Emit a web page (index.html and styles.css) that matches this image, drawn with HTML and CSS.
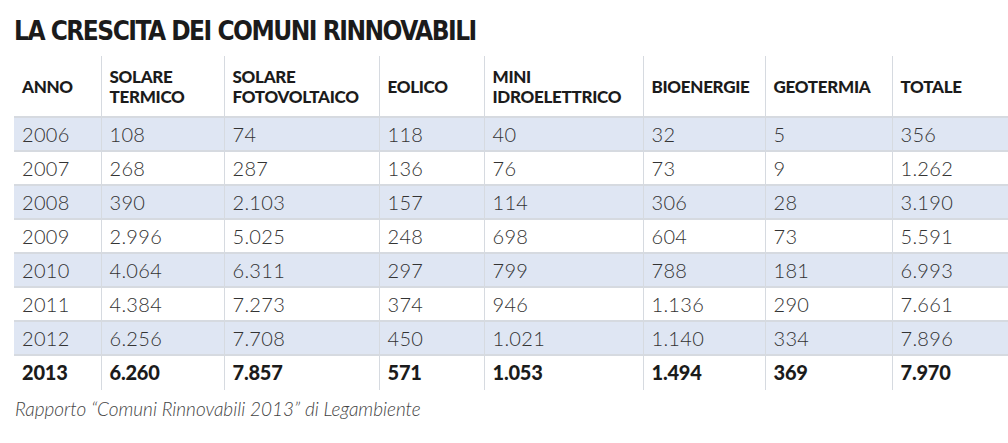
FILE: index.html
```html
<!DOCTYPE html>
<html lang="it">
<head>
<meta charset="utf-8">
<link rel="stylesheet" href="styles.css">
</head>
<body>
<h1 class="title">LA CRESCITA DEI COMUNI RINNOVABILI</h1>
<table class="data">
<colgroup>
<col class="c1"><col class="c2"><col class="c3"><col class="c4"><col class="c5"><col class="c6"><col class="c7"><col class="c8">
</colgroup>
<thead>
<tr><th>ANNO</th><th>SOLARE<br>TERMICO</th><th>SOLARE<br>FOTOVOLTAICO</th><th>EOLICO</th><th>MINI<br>IDROELETTRICO</th><th>BIOENERGIE</th><th>GEOTERMIA</th><th>TOTALE</th></tr>
</thead>
<tbody>
<tr class="alt"><td>2006</td><td>108</td><td>74</td><td>118</td><td>40</td><td>32</td><td>5</td><td>356</td></tr>
<tr><td>2007</td><td>268</td><td>287</td><td>136</td><td>76</td><td>73</td><td>9</td><td>1.262</td></tr>
<tr class="alt"><td>2008</td><td>390</td><td>2.103</td><td>157</td><td>114</td><td>306</td><td>28</td><td>3.190</td></tr>
<tr><td>2009</td><td>2.996</td><td>5.025</td><td>248</td><td>698</td><td>604</td><td>73</td><td>5.591</td></tr>
<tr class="alt"><td>2010</td><td>4.064</td><td>6.311</td><td>297</td><td>799</td><td>788</td><td>181</td><td>6.993</td></tr>
<tr><td>2011</td><td>4.384</td><td>7.273</td><td>374</td><td>946</td><td>1.136</td><td>290</td><td>7.661</td></tr>
<tr class="alt"><td>2012</td><td>6.256</td><td>7.708</td><td>450</td><td>1.021</td><td>1.140</td><td>334</td><td>7.896</td></tr>
<tr class="total"><td>2013</td><td>6.260</td><td>7.857</td><td>571</td><td>1.053</td><td>1.494</td><td>369</td><td>7.970</td></tr>
</tbody>
</table>
<p class="source">Rapporto “Comuni Rinnovabili 2013” di Legambiente</p>
</body>
</html>
```
FILE: styles.css
```css
html, body {
  margin: 0;
  padding: 0;
  background: #ffffff;
}
body {
  font-family: "Lato", "Open Sans", sans-serif;
  color: #2a2a2a;
  overflow: hidden;
  width: 1008px;
  height: 443px;
}
.title {
  margin: 0;
  padding: 17px 0 0 14px;
  height: 41px;
  box-sizing: border-box;
  font-family: "DejaVu Sans Condensed", "DejaVu Sans", sans-serif;
  font-weight: bold;
  font-size: 26px;
  line-height: 28px;
  letter-spacing: -1.5px;
  color: #1b1b1b;
}
.data {
  margin-left: 14px;
  margin-top: 15px;
  border-collapse: collapse;
  table-layout: fixed;
  width: 1010px;
}
.c1 { width: 87px; }
.c2 { width: 123px; }
.c3 { width: 155px; }
.c4 { width: 105px; }
.c5 { width: 159px; }
.c6 { width: 122px; }
.c7 { width: 127px; }
.c8 { width: 132px; }
.data th, .data td {
  text-align: left;
  padding: 0 0 0 8px;
  border-left: 1.5px solid #d6dae0;
  vertical-align: middle;
}
.data th:first-child, .data td:first-child {
  border-left: none;
}
.data th {
  height: 58px;
  font-weight: 900;
  font-size: 17px;
  line-height: 20px;
  letter-spacing: -0.3px;
  color: #1b1b1b;
  padding-top: 2px;
}
.data td {
  height: 32px;
  font-size: 20px;
  font-weight: 300;
  color: #333333;
  letter-spacing: 0.3px;
  border-top: 2px solid #d6dae0;
}
.data tr.alt td {
  background: #dfe6f3;
}
.data tr.total td {
  font-weight: 900;
  color: #1b1b1b;
  letter-spacing: -0.2px;
  padding-bottom: 2px;
}
.source {
  margin: 7px 0 0 15px;
  font-size: 19px;
  font-style: italic;
  font-weight: 300;
  color: #444444;
}
```
